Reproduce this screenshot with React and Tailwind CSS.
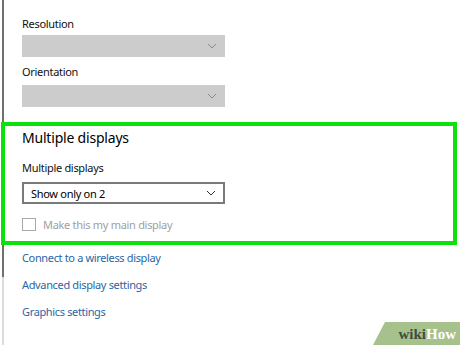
import React from 'react';

function Chevron({ color }) {
  return (
    <svg width="10" height="6" viewBox="0 0 10 6" fill="none">
      <path d="M1 1l4 4 4-4" stroke={color} strokeWidth="1" />
    </svg>
  );
}

function Select({ label, disabled }) {
  if (disabled) {
    return (
      <div className="w-[203px] h-[22px] bg-[#cccccc] flex items-center justify-end pr-[8px]">
        <Chevron color="#8a8a8a" />
      </div>
    );
  }
  return (
    <div className="w-[203px] h-[22px] border-2 border-[#7a7a7a] bg-white flex items-center justify-between pl-[7px] pr-[7px]">
      <span className="text-[11px] leading-[15px] tracking-[-0.3px] text-black">{label}</span>
      <Chevron color="#333" />
    </div>
  );
}

export default function App() {
  return (
    <div className="relative w-[460px] h-[345px] bg-white overflow-hidden font-['Noto_Sans',sans-serif] text-[#111]">
      <section className="ml-[2px] h-[122px] border-l-2 border-[#707070] pl-[18px] pt-[16px]">
        <div className="text-[11px] leading-[15px] tracking-[-0.3px]">Resolution</div>
        <div className="mt-[4px]">
          <Select disabled />
        </div>
        <div className="mt-[7px] text-[11px] leading-[15px] tracking-[-0.3px]">Orientation</div>
        <div className="mt-[6px]">
          <Select disabled />
        </div>
      </section>

      <section className="ml-[1px] w-[456px] h-[123px] border-4 border-[#0ee00e] pl-[17px] pt-[2px]">
        <h2 className="text-[14px] leading-[20px] tracking-[-0.2px] text-black">Multiple displays</h2>
        <div className="mt-[12px] text-[11px] leading-[15px] tracking-[-0.3px]">Multiple displays</div>
        <div className="mt-[7px]">
          <Select label="Show only on 2" />
        </div>
        <label className="mt-[13px] flex items-center gap-[7px]">
          <span className="w-[14px] h-[13px] border border-[#a8a8a8] bg-white" />
          <span className="text-[11px] leading-[15px] tracking-[-0.3px] text-[#a0a0a0]">Make this my main display</span>
        </label>
      </section>

      <section className="ml-[2px] flex h-[100px]">
        <div className="w-[2px] flex flex-col">
          <div className="h-[32px] bg-[#707070]" />
          <div className="flex-1 bg-[#dddddd]" />
        </div>
        <nav className="pl-[18px] pt-[5px] flex flex-col gap-[12px] text-[11px] leading-[15px] tracking-[-0.35px] text-[#2a66a6]">
          <a>Connect to a wireless display</a>
          <a>Advanced display settings</a>
          <a>Graphics settings</a>
        </nav>
      </section>

      <div className="absolute right-0 bottom-0 w-[87px] h-[23px] bg-[#a6c18c] [clip-path:polygon(12px_0,100%_0,100%_100%,0_100%)] flex items-center justify-end pr-[4px] pt-[2px] font-['Liberation_Serif',serif] font-bold text-[15px] leading-none">
        <span className="text-[#404d3a]">wiki</span>
        <span className="text-white">How</span>
      </div>
    </div>
  );
}
